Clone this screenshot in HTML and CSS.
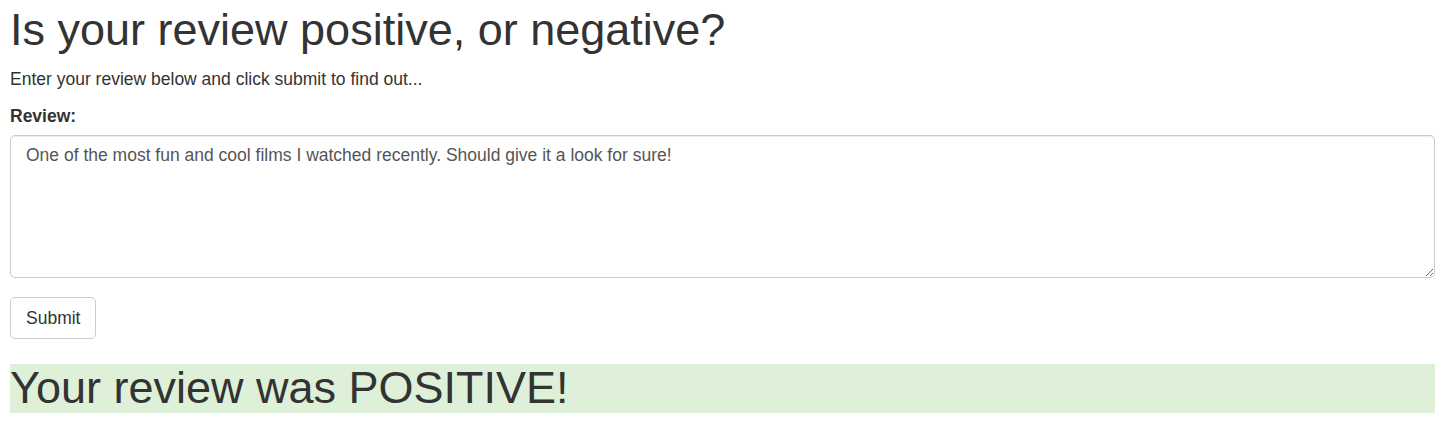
FILE: index.html
```html
<!DOCTYPE html>
<html lang="en">
<head>
<meta charset="utf-8">
<title>Review sentiment</title>
<link rel="stylesheet" href="styles.css">
</head>
<body>
<div class="page">
  <h1 class="title">Is your review positive, or negative?</h1>
  <p class="intro">Enter your review below and click submit to find out...</p>
  <form class="review-form">
    <div class="form-group">
      <label class="field-label" for="review">Review:</label>
      <textarea id="review" class="field-input">One of the most fun and cool films I watched recently. Should give it a look for sure!</textarea>
    </div>
    <button type="button" class="btn">Submit</button>
  </form>
  <h1 class="result">Your review was POSITIVE!</h1>
</div>
</body>
</html>
```
FILE: styles.css
```css
* { box-sizing: border-box; }
html, body { margin: 0; padding: 0; background: #fff; }
body {
  font-family: "Liberation Sans", Arial, sans-serif;
  font-size: 17.5px;
  line-height: 25px;
  color: #333;
}
.page {
  padding: 5px 15px 0 10px;
}
.title {
  margin: 0 0 12.5px;
  font-size: 45px;
  line-height: 1.1;
  font-weight: 500;
}
.intro {
  margin: 0 0 11.5px;
}
.review-form {
  display: flex;
  flex-direction: column;
  align-items: flex-start;
}
.form-group {
  width: 100%;
  margin-bottom: 19.5px;
}
.field-label {
  display: block;
  font-weight: bold;
  margin-bottom: 6.25px;
}
.field-input {
  display: block;
  width: 100%;
  height: 143px;
  padding: 7.5px 15px;
  font-family: inherit;
  font-size: 17.5px;
  line-height: 25px;
  color: #555;
  background: #fff;
  border: 1px solid #ccc;
  border-radius: 5px;
  box-shadow: inset 0 1px 1px rgba(0,0,0,0.075);
  resize: vertical;
  margin: 0;
}
.btn {
  margin: 0;
  padding: 7.5px 15px;
  font-family: inherit;
  font-size: 17.5px;
  line-height: 25px;
  color: #333;
  background: #fff;
  border: 1px solid #ccc;
  border-radius: 5px;
}
.result {
  margin: 24.75px 0 0;
  background: #dff0d8;
  font-size: 45px;
  line-height: 48.5px;
  font-weight: 500;
}
```
